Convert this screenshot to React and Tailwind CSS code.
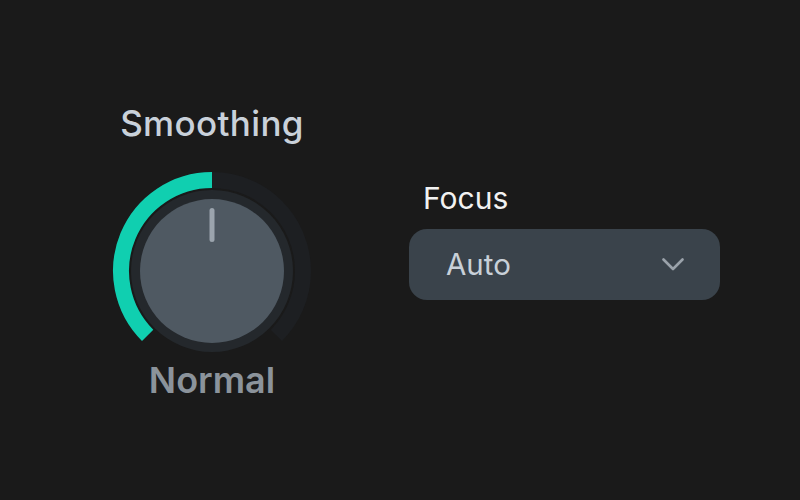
// Rotary knob with a 270° value arc (value 0..1).
function Knob({ value = 0.5 }) {
  const cx = 100;
  const cy = 100;
  const r = 91;
  const start = -135;
  const end = start + 270 * value;
  const pt = (deg) => {
    const rad = (deg * Math.PI) / 180;
    return [cx + r * Math.sin(rad), cy - r * Math.cos(rad)];
  };
  const [sx, sy] = pt(start);
  const [ex, ey] = pt(end);
  const [tx, ty] = pt(135);
  const large = end - start > 180 ? 1 : 0;

  return (
    <svg width="200" height="184" viewBox="0 0 200 184" className="block">
      <path
        d={`M ${sx} ${sy} A ${r} ${r} 0 1 1 ${tx} ${ty}`}
        fill="none"
        stroke="#1d1f22"
        strokeWidth="16"
      />
      <path
        d={`M ${sx} ${sy} A ${r} ${r} 0 ${large} 1 ${ex} ${ey}`}
        fill="none"
        stroke="#10cfb0"
        strokeWidth="16"
      />
      <circle cx={cx} cy={cy} r="81" fill="#24282c" />
      <circle cx={cx} cy={cy} r="72" fill="#4f5962" />
      <rect x="97.5" y="37" width="5" height="34" rx="2.5" fill="#9ba4ad" />
    </svg>
  );
}

export default function App() {
  return (
    <div
      className="w-full h-[500px] bg-[#1a1a1a] flex items-start pl-[112px] pt-[106px] gap-[97px]"
      style={{ fontFamily: "Inter, 'Noto Sans', sans-serif" }}
    >
      {/* Smoothing knob */}
      <div className="w-[200px] flex flex-col items-center">
        <span className="text-[35px] leading-none font-medium tracking-[0.01em] text-[#c9d1da]">Smoothing</span>
        <div className="mt-[30px]">
          <Knob value={0.5} />
        </div>
        <span className="mt-[7px] text-[36px] leading-none font-semibold text-[#8b939b]">Normal</span>
      </div>

      {/* Focus select */}
      <div className="mt-[77px] w-[311px] flex flex-col">
        <span className="pl-[14px] text-[30px] leading-none text-[#f2f2f2]">Focus</span>
        <button className="mt-[16px] h-[71px] rounded-[18px] bg-[#3a434b] flex items-center justify-between pl-[37px] pr-[36px]">
          <span className="text-[29.5px] leading-none text-[#c8d0d8]">Auto</span>
          <svg width="22" height="13" viewBox="0 0 22 13" className="block">
            <polyline
              points="1.5,1.5 11,11 20.5,1.5"
              fill="none"
              stroke="#9aa2aa"
              strokeWidth="2.6"
              strokeLinecap="round"
              strokeLinejoin="round"
            />
          </svg>
        </button>
      </div>
    </div>
  );
}
